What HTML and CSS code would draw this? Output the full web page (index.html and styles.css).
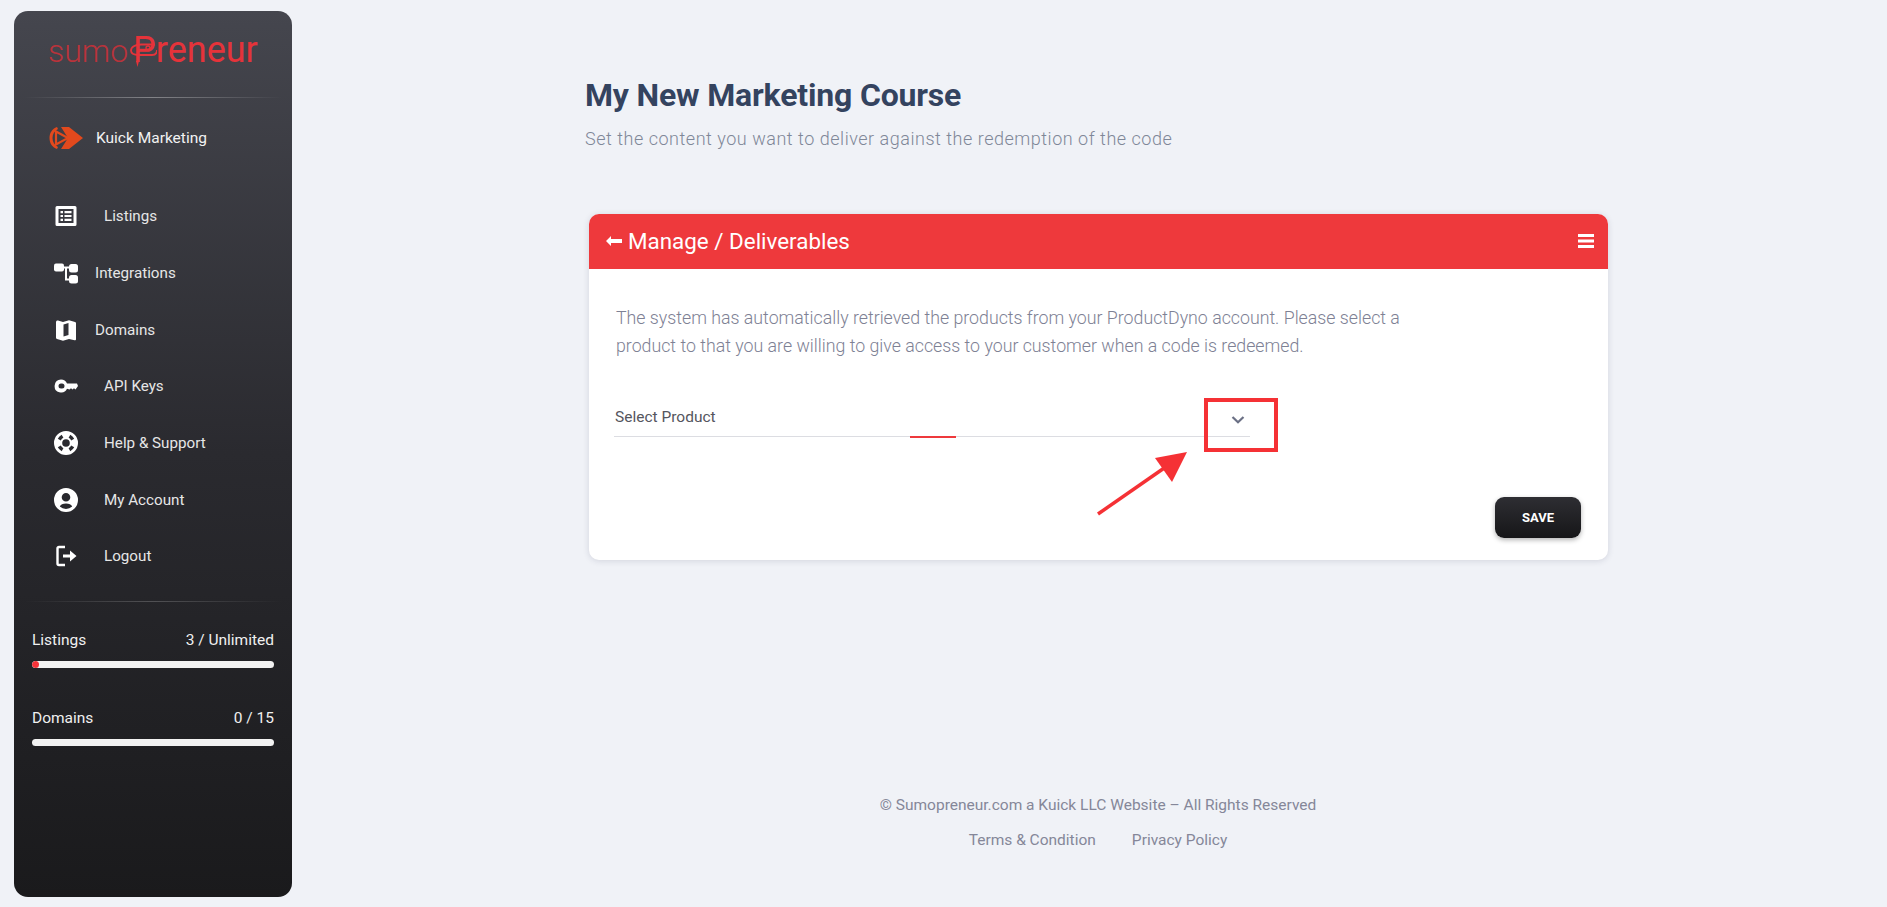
FILE: index.html
```html
<!DOCTYPE html>
<html lang="en">
<head>
    <meta charset="UTF-8">
    <meta name="viewport" content="width=device-width, initial-scale=1.0">
    <title>Manage Deliverables</title>
    <link rel="stylesheet" href="styles.css">
</head>
<body>

<aside class="sidebar">
    <div class="logo"><span class="logo-thin">sumo</span><span class="logo-bold">Preneur</span>
        <svg class="logo-swirl" viewBox="0 0 28 32" fill="none" stroke="#e5333a">
            <path d="M26 9.500H12C6 9.500 2 12 2 15.500s3 4.500 8 4.500h13c3 0 5-2 5-5" stroke-width="1.800"/>
            <circle cx="19" cy="13" r="2" stroke-width="1.300"/>
            <path d="M8 14.500h11" stroke-width="1.500"/>
            <path d="M7 26l1.500 6 1.500-6z" fill="#e5333a" stroke="none"/>
        </svg>
    </div>
    <div class="divider"></div>

    <div class="brand">
        <svg class="brand-icon" viewBox="0 0 34 24">
            <path d="M8 1C3 3 .500 7 .500 12s2.500 9 7.500 11l1-2C5.500 19 3.500 16 3.500 12S5.500 5 9 3z" fill="#e2491d"/>
            <path d="M7 5.500L19 12 7 18.500z" fill="none" stroke="#e2491d" stroke-width="2.200"/>
            <path d="M12 1h8l14 11-14 11h-8l7-11z" fill="#e2491d"/>
        </svg>
        <span>Kuick Marketing</span>
    </div>

    <nav class="nav">
        <a class="nav-link">
            <svg class="nav-icon" viewBox="0 0 24 24"><path fill-rule="evenodd" d="M3 2h18a1.500 1.500 0 0 1 1.500 1.500v17A1.500 1.500 0 0 1 21 22H3a1.500 1.500 0 0 1-1.500-1.500v-17A1.500 1.500 0 0 1 3 2zm1.500 3v14h15V5zM6.500 7h2.500v2.200H6.500zm4 0h7v2.200h-7zm-4 3.900h2.500v2.200H6.500zm4 0h7v2.200h-7zm-4 3.900h2.500V17H6.500zm4 0h7V17h-7z"/></svg>
            <span class="nav-label">Listings</span>
        </a>
        <a class="nav-link">
            <svg class="nav-icon" viewBox="0 0 24 24"><rect x="0" y="2.500" width="10" height="8" rx="2"/><rect x="15" y="3" width="9" height="8.500" rx="2.500"/><rect x="15" y="14" width="9" height="8.500" rx="2.500"/><path d="M9 6.500h7M12 6.500v12h4" fill="none" stroke="#fff" stroke-width="2"/></svg>
            <span class="nav-label tight">Integrations</span>
        </a>
        <a class="nav-link">
            <svg class="nav-icon" viewBox="0 0 24 24"><path fill-rule="evenodd" d="M4 2.500l5 1.500 6-1.800 6 1.800c.8.200 1 .7 1 1.300v16c0 .8-.7 1.200-1.400 1L15 21l-6 1.800-6-1.800c-.7-.2-1-.7-1-1.300V4c0-1 1-1.800 2-1.500zM9.500 6.500v12l5-1.500V5z"/></svg>
            <span class="nav-label tight">Domains</span>
        </a>
        <a class="nav-link">
            <svg class="nav-icon" viewBox="0 0 24 24"><path fill-rule="evenodd" d="M7 5.500a6.500 6.500 0 0 1 6 4H23l1 2.500-2.500 3.500-1.500-1.200-1.500 1.200-1.500-1.200-1.500 1.200-2.500-.7A6.500 6.500 0 1 1 7 5.500zm0 4a2.500 2.500 0 1 0 0 5h1a2.500 2.500 0 1 0 0-5z"/></svg>
            <span class="nav-label">API Keys</span>
        </a>
        <a class="nav-link">
            <svg class="nav-icon" viewBox="0 0 24 24"><path fill-rule="evenodd" d="M12 0a12 12 0 1 1 0 24 12 12 0 0 1 0-24zm0 8.200a3.800 3.800 0 1 0 0 7.600 3.800 3.800 0 0 0 0-7.600zM7.700 3.800A9.500 9.500 0 0 0 3.800 7.700l3 1.700a6 6 0 0 1 2.600-2.600zm8.600 0l-1.700 3a6 6 0 0 1 2.600 2.600l3-1.700a9.500 9.500 0 0 0-3.900-3.900zM3.800 16.300a9.500 9.500 0 0 0 3.900 3.900l1.700-3a6 6 0 0 1-2.600-2.600zm16.400 0l-3-1.700a6 6 0 0 1-2.600 2.600l1.700 3a9.500 9.500 0 0 0 3.900-3.900z"/></svg>
            <span class="nav-label">Help &amp; Support</span>
        </a>
        <a class="nav-link">
            <svg class="nav-icon" viewBox="0 0 24 24"><path fill-rule="evenodd" d="M12 0a12 12 0 1 1 0 24 12 12 0 0 1 0-24zm0 5a4.300 4.300 0 1 0 0 8.600A4.300 4.300 0 0 0 12 5zm0 10.500c-3 0-5.500 1.200-6.200 3.100A9.300 9.300 0 0 0 12 21a9.300 9.300 0 0 0 6.200-2.400c-.7-1.900-3.200-3.100-6.200-3.100z"/></svg>
            <span class="nav-label">My Account</span>
        </a>
        <a class="nav-link">
            <svg class="nav-icon" viewBox="0 0 24 24"><path d="M11 3H5a1.500 1.500 0 0 0-1.500 1.500v15A1.500 1.500 0 0 0 5 21h6" fill="none" stroke="#fff" stroke-width="2.400"/><path d="M9 10.500h7V6.500l6.500 5.500-6.500 5.500v-4H9z"/></svg>
            <span class="nav-label">Logout</span>
        </a>
    </nav>
    <div class="divider divider-low"></div>

    <div class="stat">
        <div class="stat-row"><span>Listings</span><span>3 / Unlimited</span></div>
        <div class="bar"><div class="bar-fill" style="width: 3%"></div></div>
    </div>
    <div class="stat">
        <div class="stat-row"><span>Domains</span><span>0 / 15</span></div>
        <div class="bar"></div>
    </div>
</aside>

<main class="main">
    <div class="content">
        <h1 class="title">My New Marketing Course</h1>
        <p class="subtitle">Set the content you want to deliver against the redemption of the code</p>

        <section class="card">
            <header class="card-head">
                <h2>
                    <svg class="back-icon" viewBox="0 0 16 10"><path d="M5 0v3h11v4H5v3L0 5z"/></svg>
                    Manage / Deliverables
                </h2>
                <svg class="menu-icon" viewBox="0 0 16 14"><path d="M0 0h16v3H0zM0 5.500h16v3H0zM0 11h16v3H0z"/></svg>
            </header>
            <div class="card-body">
                <p class="intro">The system has automatically retrieved the products from your ProductDyno account. Please select a product to that you are willing to give access to your customer when a code is redeemed.</p>
                <div class="select">
                    <span>Select Product</span>
                    <svg class="chevron" viewBox="0 0 14 8"><path d="M1.500 1L7 6.300 12.500 1" fill="none" stroke="#6b7085" stroke-width="2.200"/></svg>
                    <div class="select-mark"></div>
                </div>
                <div class="actions"><button class="save">SAVE</button></div>

                <!-- annotation drawn on top of the screenshot -->
                <div class="callout"></div>
                <svg class="callout-arrow" viewBox="0 0 100 70">
                    <path d="M2 68L74 18" stroke="#f53135" stroke-width="3.500" fill="none"/>
                    <path d="M91 6L59 12 76 36z" fill="#f53135"/>
                </svg>
            </div>
        </section>

        <footer class="footer">
            <p>&copy; Sumopreneur.com a Kuick LLC Website &ndash; All Rights Reserved</p>
            <div class="footer-links"><a>Terms &amp; Condition</a><a>Privacy Policy</a></div>
        </footer>
    </div>
</main>

</body>
</html>
```

FILE: styles.css
```css
* {
    box-sizing: border-box;
}
body {
    margin: 0;
    height: 907px;
    overflow: hidden;
    display: flex;
    background-color: #f0f2f7;
    font-family: Roboto, "Liberation Sans", sans-serif;
}

/* sidebar */
.sidebar {
    width: 278px;
    height: 886px;
    margin: 11px 0 0 14px;
    flex-shrink: 0;
    border-radius: 14px;
    background: linear-gradient(180deg, #45464e 0%, #2a2a2f 50%, #1a1a1c 100%);
    color: #fff;
}
.logo {
    position: relative;
    height: 86px;
    padding: 17px 0 0 34px;
    line-height: 44px;
    color: #e5333a;
    white-space: nowrap;
}
.logo-thin {
    font-size: 32px;
    font-weight: 300;
    color: #b9333b;
}
.logo-bold {
    margin-left: 5px;
    font-size: 36px;
    font-weight: 400;
}
.logo-swirl {
    position: absolute;
    left: 115px;
    top: 24px;
    width: 28px;
    height: 32px;
}
.divider {
    height: 1px;
    margin: 0 10px;
    background: linear-gradient(90deg, rgba(255,255,255,0), rgba(255,255,255,0.35) 50%, rgba(255,255,255,0));
}
.divider-low {
    margin-top: 16px;
    background: linear-gradient(90deg, rgba(255,255,255,0), rgba(255,255,255,0.2) 50%, rgba(255,255,255,0));
}
.brand {
    display: flex;
    align-items: center;
    height: 80px;
    padding-left: 35px;
    font-size: 15.500px;
    color: #f2f2f2;
}
.brand-icon {
    width: 34px;
    height: 24px;
    margin-right: 13px;
}
.nav {
    display: flex;
    flex-direction: column;
    padding-top: 10px;
}
.nav-link {
    display: flex;
    align-items: center;
    height: 56.700px;
    padding-left: 40px;
    font-size: 15.200px;
    color: #e6e6e6;
}
.nav-icon {
    width: 24px;
    height: 24px;
    fill: #fff;
    flex-shrink: 0;
}
.nav-label {
    margin-left: 26px;
}
.nav-label.tight {
    margin-left: 17px;
}
.stat {
    padding: 29px 18px 0;
    height: 78px;
}
.stat-row {
    display: flex;
    justify-content: space-between;
    font-size: 15.500px;
    line-height: 18px;
    color: #f0f0f0;
}
.bar {
    height: 7px;
    margin-top: 12px;
    border-radius: 4px;
    background-color: #f2f2f2;
    overflow: hidden;
}
.bar-fill {
    height: 100%;
    border-radius: 4px;
    background-color: #f5333a;
}

/* main column */
.main {
    flex: 1;
    margin-left: 17px;
    display: flex;
    justify-content: center;
}
.content {
    width: 1026px;
}
.title {
    margin: 0;
    padding-top: 74px;
    font-size: 32px;
    line-height: 42px;
    font-weight: 700;
    color: #34435f;
    letter-spacing: -0.170px;
}
.subtitle {
    margin: 11px 0 0;
    font-size: 18px;
    line-height: 24px;
    font-weight: 300;
    color: #7f8798;
    letter-spacing: 0.520px;
}
.card {
    width: 1019px;
    margin: 63px 0 0 4px;
    border-radius: 10px;
    background-color: #fff;
    box-shadow: 0 1px 6px rgba(40, 50, 80, 0.15);
}
.card-head {
    display: flex;
    justify-content: space-between;
    align-items: center;
    height: 55px;
    padding: 0 14px 2px 17px;
    border-radius: 10px 10px 0 0;
    background-color: #ee393c;
    color: #fff;
}
.card-head h2 {
    display: flex;
    align-items: center;
    gap: 6px;
    margin: 0;
    font-size: 22.400px;
    font-weight: 400;
}
.back-icon {
    width: 16px;
    height: 10px;
    fill: #fff;
}
.menu-icon {
    width: 16px;
    height: 14px;
    fill: #fff;
}
.card-body {
    position: relative;
    height: 291px;
    padding: 35px 27px 0;
}
.intro {
    margin: 0;
    width: 820px;
    font-size: 17.750px;
    line-height: 28px;
    font-weight: 300;
    color: #7e8194;
}
.select {
    position: relative;
    display: flex;
    justify-content: space-between;
    align-items: center;
    width: 636px;
    height: 37px;
    margin: 40px 0 0 -2px;
    padding: 0 5px 3px 1px;
    border-bottom: 1px solid #dcdde2;
    font-size: 15.500px;
    color: #55565e;
}
.chevron {
    width: 14px;
    height: 8px;
    transform: translate(0, 3px);
}
.select-mark {
    position: absolute;
    left: 296px;
    bottom: -2px;
    width: 46px;
    height: 2px;
    background-color: #ee393c;
}
.actions {
    display: flex;
    justify-content: flex-end;
    margin-top: 60px;
}
.save {
    width: 86px;
    height: 41px;
    border: none;
    border-radius: 9px;
    background: linear-gradient(180deg, #2e2e33, #161618);
    box-shadow: 0 2px 5px rgba(0, 0, 0, 0.3);
    color: #fff;
    font-family: Roboto, sans-serif;
    font-size: 13px;
    font-weight: 700;
}
.callout {
    position: absolute;
    left: 615px;
    top: 129px;
    width: 74px;
    height: 54px;
    border: 4px solid #f53135;
}
.callout-arrow {
    position: absolute;
    left: 507px;
    top: 177px;
    width: 100px;
    height: 70px;
}
.footer {
    margin-top: 235px;
    text-align: center;
    font-size: 15.500px;
    color: #858799;
}
.footer p {
    margin: 0;
    line-height: 20px;
}
.footer-links {
    display: flex;
    justify-content: center;
    gap: 36px;
    margin-top: 15px;
    line-height: 20px;
}
```
